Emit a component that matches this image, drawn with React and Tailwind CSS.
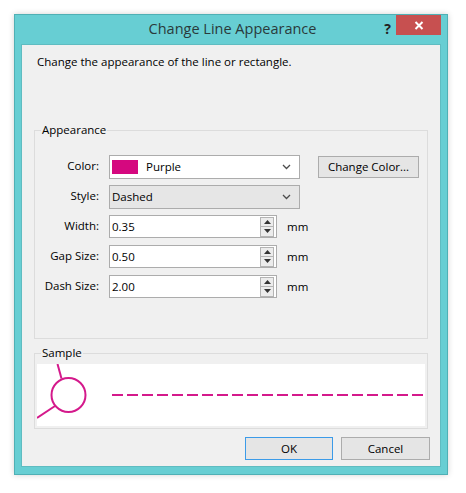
import React from "react";

const font = { fontFamily: '"Open Sans", "Noto Sans", sans-serif' };

function Chevron() {
  return (
    <svg width="9" height="6" viewBox="0 0 9 6" className="shrink-0">
      <path d="M1 1 L4.5 4.5 L8 1" fill="none" stroke="#4d4d4d" strokeWidth="1.3" />
    </svg>
  );
}

function Spin({ value }) {
  return (
    <div className="flex items-center">
      <div className="w-[168px] h-[23px] bg-white border border-[#acacac] flex items-center justify-between pl-[2px] pr-[2px]">
        <span className="text-[11.5px] text-black leading-none">{value}</span>
        <div className="flex flex-col gap-0">
          <div className="w-[14px] h-[10px] border border-[#b4b4b4] bg-[#ececec] flex items-center justify-center">
            <svg width="7" height="4" viewBox="0 0 7 4"><path d="M0 4 L3.5 0 L7 4 Z" fill="#333" /></svg>
          </div>
          <div className="w-[14px] h-[10px] border border-[#b4b4b4] border-t-0 bg-[#ececec] flex items-center justify-center">
            <svg width="7" height="4" viewBox="0 0 7 4"><path d="M0 0 L3.5 4 L7 0 Z" fill="#333" /></svg>
          </div>
        </div>
      </div>
      <span className="ml-[10px] text-[11.5px] text-black">mm</span>
    </div>
  );
}

function Label({ children }) {
  return (
    <div className="w-[64px] text-right text-[11.5px] text-black mr-[10px] -mt-[2px]">{children}</div>
  );
}

export default function App() {
  return (
    <div className="w-[466px] h-[493px] bg-white relative" style={font}>
      <div className="absolute left-[14px] top-[14px] w-[434px] h-[461px] bg-[#67ced3] border border-[#4fb0b5] shadow-[0_0_6px_rgba(0,0,0,0.18)] flex flex-col px-[6px] pb-[7px]">
        {/* title bar */}
        <div className="relative h-[29px] shrink-0 flex items-center justify-center">
          <span className="text-[14.5px] text-[#2a3a3b] leading-none" style={{ marginLeft: "3px" }}>Change Line Appearance</span>
          <span className="absolute right-[50px] top-[3px] text-[14px] font-bold text-[#222]">?</span>
          <div className="absolute right-[0px] top-0 w-[45px] h-[20px] bg-[#c75050] flex items-center justify-center">
            <svg width="10" height="9" viewBox="0 0 10 9">
              <path d="M1.5 1 L8.5 8 M8.5 1 L1.5 8" stroke="white" strokeWidth="2" />
            </svg>
          </div>
        </div>
        {/* client area */}
        <div className="flex-1 bg-[#f0f0f0] border border-[#5fbcc1] flex flex-col text-[11.5px] text-black">
          <div className="pl-[15px] pt-[8px] h-[34px]">Change the appearance of the line or rectangle.</div>
          <div className="h-[51px]" />
          {/* Appearance group */}
          <div className="relative ml-[12px] w-[394px] h-[209px] border border-[#dcdcdc] flex flex-col pt-[24px]">
            <span className="absolute left-[6px] -top-[9px] px-[1px] bg-[#f0f0f0] leading-[16px]">Appearance</span>
            <div className="flex items-center h-[24px]">
              <Label>Color:</Label>
              <div className="w-[191px] h-[24px] bg-white border border-[#acacac] flex items-center pl-[2px] pr-[8px]">
                <div className="w-[26px] h-[14px] bg-[#d5087f]" />
                <span className="ml-[8px] flex-1">Purple</span>
                <Chevron />
              </div>
              <div className="ml-[18px] w-[101px] h-[22px] border border-[#acacac] bg-[#e5e5e5] flex items-center justify-center">Change Color...</div>
            </div>
            <div className="flex items-center h-[24px] mt-[6px]">
              <Label>Style:</Label>
              <div className="w-[191px] h-[24px] bg-[#e6e6e6] border border-[#acacac] flex items-center pl-[2px] pr-[8px]">
                <span className="flex-1">Dashed</span>
                <Chevron />
              </div>
            </div>
            <div className="flex items-center h-[23px] mt-[6px]">
              <Label>Width:</Label>
              <Spin value="0.35" />
            </div>
            <div className="flex items-center h-[23px] mt-[7px]">
              <Label>Gap Size:</Label>
              <Spin value="0.50" />
            </div>
            <div className="flex items-center h-[23px] mt-[7px]">
              <Label>Dash Size:</Label>
              <Spin value="2.00" />
            </div>
          </div>
          {/* Sample group */}
          <div className="relative ml-[12px] mt-[14px] w-[394px] h-[76px] border border-[#dcdcdc] px-[2px] pt-[10px]">
            <span className="absolute left-[6px] -top-[9px] px-[1px] bg-[#f0f0f0] leading-[16px]">Sample</span>
            <div className="w-[388px] h-[62px] bg-white">
              <svg width="388" height="62" viewBox="0 0 388 62">
                <g stroke="#d4198b" strokeWidth="2" fill="none">
                  <line x1="20.5" y1="0" x2="24.5" y2="14.5" />
                  <circle cx="31.5" cy="31" r="17" />
                  <line x1="0" y1="54" x2="18" y2="42" />
                  <line x1="75" y1="31" x2="388" y2="31" strokeDasharray="11 4" />
                </g>
              </svg>
            </div>
          </div>
          {/* buttons */}
          <div className="flex justify-end gap-[8px] pr-[10px] mt-[8px]">
            <div className="w-[88px] h-[23px] border border-[#3c9be8] bg-[#e5e5e5] flex items-center justify-center">OK</div>
            <div className="w-[89px] h-[23px] border border-[#acacac] bg-[#e5e5e5] flex items-center justify-center">Cancel</div>
          </div>
        </div>
      </div>
    </div>
  );
}
